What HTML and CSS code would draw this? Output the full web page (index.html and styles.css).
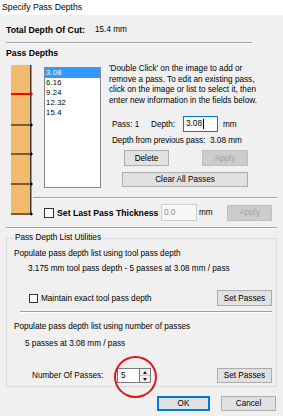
FILE: index.html
```html
<!DOCTYPE html>
<html lang="en">
<head>
    <meta charset="UTF-8">
    <meta name="viewport" content="width=device-width, initial-scale=1.0">
    <title>Specify Pass Depths</title>
    <link rel="stylesheet" href="styles.css">
</head>
<body>
    <div class="titlebar">Specify Pass Depths</div>

    <div class="dialog">
        <div class="total-row">
            <span class="total-label">Total Depth Of Cut:</span>
            <span>15.4 mm</span>
        </div>
        <div class="sep sep-short"></div>
        <div class="heading">Pass Depths</div>

        <div class="pass-area">
            <!-- depth image: one line per pass, selected pass in red -->
            <svg class="depth-image" width="27" height="152" viewBox="0 0 27 152">
                <rect x="5" y="1" width="19" height="150" fill="#f2ba6c" />
                <rect x="24" y="1" width="1.5" height="150" fill="#3c3c3c" />
                <line x1="5" y1="30" x2="25" y2="30" stroke="#ff0000" stroke-width="2" />
                <polygon points="25,27.5 27,30 25,32.5" fill="#ff0000" />
                <line x1="5" y1="61" x2="26" y2="61" stroke="#000" stroke-width="1" />
                <polygon points="25,59 27,61 25,63" fill="#000" />
                <line x1="5" y1="90" x2="26" y2="90" stroke="#000" stroke-width="1" />
                <polygon points="25,88 27,90 25,92" fill="#000" />
                <line x1="5" y1="120" x2="26" y2="120" stroke="#000" stroke-width="1" />
                <polygon points="25,118 27,120 25,122" fill="#000" />
                <line x1="5" y1="150" x2="26" y2="150" stroke="#000" stroke-width="1" />
                <polygon points="25,148 27,150 25,152" fill="#000" />
            </svg>

            <div class="pass-main">
                <div class="pass-top">
                    <div class="listbox">
                        <div class="item selected">3.08</div>
                        <div class="item">6.16</div>
                        <div class="item">9.24</div>
                        <div class="item">12.32</div>
                        <div class="item">15.4</div>
                    </div>
                    <div class="pass-panel">
                        <p class="hint">'Double Click' on the image to add or<br>remove a pass. To edit an existing pass,<br>click on the image or list to select it, then<br>enter new information in the fields below.</p>
                        <div class="pass-row">
                            <span class="pass-no">Pass: 1</span>
                            <span class="depth-label">Depth:</span>
                            <div class="field field-depth focused">3.08<span class="caret"></span></div>
                            <span class="unit">mm</span>
                        </div>
                        <div class="prev-row">
                            <span class="prev-label">Depth from previous pass:</span>
                            <span>3.08 mm</span>
                        </div>
                        <div class="btn-row">
                            <button class="btn btn-delete">Delete</button>
                            <button class="btn btn-apply" disabled>Apply</button>
                        </div>
                        <button class="btn btn-clear">Clear All Passes</button>
                    </div>
                </div>
                <div class="sep sep-mid"></div>
                <div class="last-row">
                    <span class="check"></span>
                    <span class="last-label">Set Last Pass Thickness</span>
                    <div class="field field-last disabled">0.0</div>
                    <span class="last-unit">mm</span>
                    <button class="btn btn-last" disabled>Apply</button>
                </div>
            </div>
        </div>

        <div class="sep"></div>

        <fieldset class="group">
            <legend>Pass Depth List Utilities</legend>
            <div class="g-line g-first">Populate pass depth list using tool pass depth</div>
            <div class="g-line g-info">3.175 mm tool pass depth - 5 passes at 3.08 mm / pass</div>
            <div class="g-row g-row-tool">
                <span class="check check-small"></span>
                <span class="g-check-label">Maintain exact tool pass depth</span>
                <button class="btn btn-set">Set Passes</button>
            </div>
            <div class="sep sep-inner"></div>
            <div class="g-line g-second">Populate pass depth list using number of passes</div>
            <div class="g-line g-info2">5 passes at 3.08 mm / pass</div>
            <div class="g-row g-row-count">
                <span class="count-label">Number Of Passes:</span>
                <div class="spin">
                    <div class="spin-field">5</div>
                    <div class="spin-btns">
                        <span class="spin-up"></span>
                        <span class="spin-down"></span>
                    </div>
                    <span class="highlight"></span>
                </div>
                <button class="btn btn-set btn-set2">Set Passes</button>
            </div>
        </fieldset>

        <div class="footer">
            <button class="btn btn-ok">OK</button>
            <button class="btn btn-cancel">Cancel</button>
        </div>
    </div>
</body>
</html>
```

FILE: styles.css
```css
body {
    margin: 0;
    background: #f0f0f0;
    font-family: "Liberation Sans", Arial, sans-serif;
    font-size: 8.2px;
    color: #000;
}
.titlebar {
    height: 15px;
    line-height: 15px;
    padding-left: 2px;
    background: #fff;
    font-size: 8.7px;
}
.dialog {
    padding: 0 6px;
}
.total-row {
    display: flex;
    height: 12px;
    line-height: 12px;
    margin-top: 9px;
}
.total-label {
    width: 89px;
    font-weight: bold;
    font-size: 8.7px;
}
.sep {
    height: 0;
    border-top: 1px solid #a0a0a0;
    border-bottom: 1px solid #fff;
}
.sep-short {
    width: 246px;
    margin-top: 6px;
}
.heading {
    margin-top: 3px;
    height: 12px;
    line-height: 12px;
    font-weight: bold;
    font-size: 8.7px;
}
.pass-area {
    display: flex;
    margin-top: 5px;
}
.depth-image {
    display: block;
    flex: none;
}
.pass-main {
    flex: 1;
}
.pass-top {
    display: flex;
}
.listbox {
    width: 55px;
    height: 119px;
    margin: 3px 0 0 11px;
    background: #fff;
    border: 1px solid #828790;
}
.item {
    height: 10px;
    line-height: 10px;
    padding-left: 1px;
    font-size: 7.6px;
    letter-spacing: 0.2px;
}
.item.selected {
    background: #3399ff;
    color: #fff;
}
.pass-panel {
    margin-left: 8px;
}
.hint {
    margin: 0;
    line-height: 10.6px;
    white-space: nowrap;
}
.pass-row {
    display: flex;
    align-items: center;
    margin-top: 10px;
    padding-left: 3px;
    height: 16px;
}
.pass-no {
    width: 39px;
}
.depth-label {
    width: 32px;
}
.field {
    box-sizing: border-box;
    height: 16px;
    line-height: 14px;
    padding-left: 2px;
    background: #fff;
    border: 1px solid #7a7a7a;
}
.field.focused {
    border-color: #0078d7;
}
.field.disabled {
    background: #f7f7f7;
    border-color: #cccccc;
    color: #8a8a8a;
}
.field-depth {
    width: 35px;
}
.caret {
    display: inline-block;
    width: 1px;
    height: 10px;
    margin-left: 1px;
    vertical-align: middle;
    background: #000;
}
.unit {
    margin-left: 5px;
}
.prev-row {
    display: flex;
    height: 12px;
    line-height: 12px;
    margin-top: 3px;
    padding-left: 3px;
    white-space: nowrap;
}
.prev-label {
    flex: none;
    width: 98px;
    letter-spacing: -0.1px;
}
.btn {
    box-sizing: border-box;
    padding: 0;
    font: inherit;
    color: #000;
    background: #e1e1e1;
    border: 1px solid #adadad;
    height: 16px;
}
.btn:disabled {
    background: #cccccc;
    border-color: #bfbfbf;
    color: #a3a3a3;
}
.btn-row {
    display: flex;
    gap: 33px;
    margin-top: 3px;
    padding-left: 15px;
}
.btn-delete {
    width: 45px;
}
.btn-apply {
    width: 46px;
}
.btn-clear {
    display: block;
    width: 126px;
    height: 15px;
    margin: 6px 0 0 13px;
}
.sep-mid {
    margin-top: 9px;
}
.last-row {
    display: flex;
    align-items: center;
    height: 17px;
    margin-top: 5px;
    padding-left: 11px;
}
.check {
    box-sizing: border-box;
    width: 10px;
    height: 10px;
    background: #fff;
    border: 1px solid #333;
}
.last-label {
    width: 104px;
    margin-left: 3px;
    font-weight: bold;
    font-size: 8.7px;
}
.field-last {
    width: 36px;
    height: 17px;
    line-height: 15px;
}
.last-unit {
    width: 28px;
    margin-left: 2px;
}
.btn-last {
    width: 45px;
}
.pass-area + .sep {
    margin-top: 6px;
}
.group {
    margin: 3px 0 0;
    padding: 0 4px 3px 7px;
    border: 1px solid #dcdcdc;
}
.group legend {
    padding: 0 1px;
    line-height: 12px;
}
.g-line {
    height: 12px;
    line-height: 12px;
}
.g-first {
    margin-top: 4px;
}
.g-info {
    margin-top: 3px;
    padding-left: 14px;
}
.g-row {
    display: flex;
    align-items: center;
}
.g-row-tool {
    margin-top: 15px;
    padding-left: 15px;
    height: 16px;
}
.check-small {
    width: 9px;
    height: 9px;
}
.g-check-label {
    margin-left: 3px;
    flex: 1;
}
.btn-set {
    width: 55px;
}
.sep-inner {
    margin: 5px 0 0 6px;
}
.g-second {
    margin-top: 8px;
}
.g-info2 {
    margin-top: 5px;
    padding-left: 11px;
}
.g-row-count {
    margin-top: 18px;
    padding-left: 18px;
    height: 15px;
}
.count-label {
    width: 85px;
}
.spin {
    position: relative;
    display: flex;
    height: 15px;
}
.spin-field {
    box-sizing: border-box;
    width: 22px;
    height: 15px;
    line-height: 13px;
    padding-left: 3px;
    background: #fff;
    border: 1px solid #7a7a7a;
    border-right: none;
}
.spin-btns {
    box-sizing: border-box;
    display: flex;
    flex-direction: column;
    width: 12px;
    height: 15px;
    border: 1px solid #7a7a7a;
    background: #f0f0f0;
}
.spin-up,
.spin-down {
    flex: 1;
    position: relative;
}
.spin-up {
    border-bottom: 1px solid #c8c8c8;
}
.spin-up::after,
.spin-down::after {
    content: "";
    position: absolute;
    left: 3px;
    top: 2px;
    border-left: 2.5px solid transparent;
    border-right: 2.5px solid transparent;
}
.spin-up::after {
    border-bottom: 3px solid #222;
}
.spin-down::after {
    border-top: 3px solid #222;
}
.highlight {
    position: absolute;
    left: -3px;
    top: -12px;
    width: 43px;
    height: 42px;
    box-sizing: border-box;
    border: 2px solid #e2141c;
    border-radius: 50%;
    pointer-events: none;
}
.btn-set2 {
    height: 15px;
    margin-left: auto;
}
.footer {
    display: flex;
    justify-content: flex-end;
    gap: 11px;
    margin: 9px 1px 0 0;
}
.btn-ok {
    width: 53px;
    height: 15px;
    border-color: #0078d7;
    box-shadow: inset 0 0 0 1px #0078d7;
}
.btn-cancel {
    width: 55px;
    height: 15px;
}
```
